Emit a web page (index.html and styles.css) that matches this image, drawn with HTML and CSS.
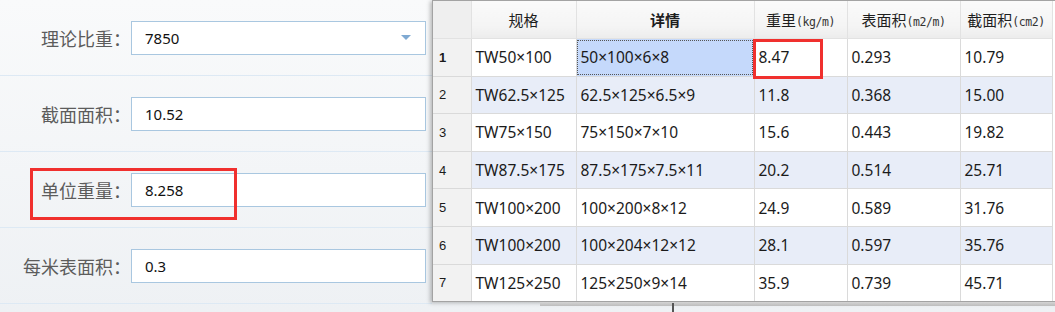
FILE: index.html
```html
<!DOCTYPE html>
<html lang="zh-CN">
<head>
  <meta charset="UTF-8">
  <meta name="viewport" content="width=device-width, initial-scale=1.0">
  <title>型钢参数</title>
  <link rel="stylesheet" href="styles.css">
</head>
<body>
  <div class="panel">
    <div class="form-row">
      <label class="field-label" for="density">理论比重：</label>
      <div class="field combo">
        <input type="text" id="density" value="7850">
        <span class="arrow"></span>
      </div>
    </div>
    <div class="form-row">
      <label class="field-label" for="area">截面面积：</label>
      <div class="field"><input type="text" id="area" value="10.52"></div>
    </div>
    <div class="form-row">
      <label class="field-label" for="weight">单位重量：</label>
      <div class="field"><input type="text" id="weight" value="8.258"></div>
      <span class="mark mark-weight"></span>
    </div>
    <div class="form-row">
      <label class="field-label" for="surface">每米表面积：</label>
      <div class="field"><input type="text" id="surface" value="0.3"></div>
    </div>
  </div>

  <!-- dropdown grid of section sizes, floats over the form -->
  <div class="popup">
    <table class="grid">
      <colgroup>
        <col class="c-num"><col class="c-spec"><col class="c-detail"><col class="c-wt"><col class="c-surf"><col class="c-area">
      </colgroup>
      <thead>
        <tr>
          <th class="corner"></th>
          <th>规格</th>
          <th class="bold">详情</th>
          <th>重里<small>(kg/m)</small></th>
          <th>表面积<small>(m2/m)</small></th>
          <th>截面积<small>(cm2)</small></th>
        </tr>
      </thead>
      <tbody>
        <tr>
          <td class="num bold">1</td><td>TW50×100</td><td class="selected">50×100×6×8</td>
          <td>8.47</td><td>0.293</td><td>10.79</td>
        </tr>
        <tr class="alt">
          <td class="num">2</td><td>TW62.5×125</td><td>62.5×125×6.5×9</td><td>11.8</td><td>0.368</td><td>15.00</td>
        </tr>
        <tr>
          <td class="num">3</td><td>TW75×150</td><td>75×150×7×10</td><td>15.6</td><td>0.443</td><td>19.82</td>
        </tr>
        <tr class="alt">
          <td class="num">4</td><td>TW87.5×175</td><td>87.5×175×7.5×11</td><td>20.2</td><td>0.514</td><td>25.71</td>
        </tr>
        <tr>
          <td class="num">5</td><td>TW100×200</td><td>100×200×8×12</td><td>24.9</td><td>0.589</td><td>31.76</td>
        </tr>
        <tr class="alt">
          <td class="num">6</td><td>TW100×200</td><td>100×204×12×12</td><td>28.1</td><td>0.597</td><td>35.76</td>
        </tr>
        <tr>
          <td class="num">7</td><td>TW125×250</td><td>125×250×9×14</td><td>35.9</td><td>0.739</td><td>45.71</td>
        </tr>
      </tbody>
    </table>
    <span class="mark mark-cell"></span>
  </div>
  <div class="scroll-strip"><span class="tick"></span></div>
</body>
</html>
```

FILE: styles.css
```css
body {
  margin: 0;
  padding: 0;
  width: 1055px;
  height: 312px;
  overflow: hidden;
  position: relative;
  font-family: "Noto Sans", "Noto Sans CJK SC", sans-serif;
  background: linear-gradient(180deg, #f9fafb 0%, #eef1f4 100%);
}

/* left form */
.panel {
  width: 432px;
}

.form-row {
  position: relative;
  display: flex;
  align-items: center;
  height: 75px;
  border-bottom: 1px solid #dde9f4;
}

.field-label {
  width: 131px;
  flex: none;
  text-align: right;
  font-family: "Noto Sans CJK SC", sans-serif;
  font-size: 18px;
  color: #5c5c5c;
  white-space: nowrap;
}

.field {
  position: relative;
  width: 295px;
  height: 34px;
  box-sizing: border-box;
  border: 1px solid #a9c7e0;
  background: #fff;
}

.field input {
  width: 100%;
  height: 100%;
  box-sizing: border-box;
  border: none;
  outline: none;
  padding: 0 0 0 13px;
  background: transparent;
  font-family: "Noto Sans", sans-serif;
  font-size: 15px;
  color: #111;
}

.combo .arrow {
  position: absolute;
  right: 14px;
  top: 13px;
  width: 0;
  height: 0;
  border-left: 5px solid transparent;
  border-right: 5px solid transparent;
  border-top: 5px solid #7fa9d2;
}

.mark {
  position: absolute;
  border: 3px solid #f0302e;
  box-sizing: border-box;
  pointer-events: none;
}

.mark-weight {
  left: 30px;
  top: 16px;
  width: 207px;
  height: 52px;
}

/* dropdown grid */
.popup {
  position: absolute;
  left: 432px;
  top: 0;
  width: 640px;
  height: 302px;
  box-sizing: border-box;
  border: 1px solid #a3a3a3;
  border-right: none;
  background: #fff;
  box-shadow: -2px 1px 4px rgba(0, 0, 0, 0.25);
  overflow: hidden;
}

.grid {
  border-collapse: collapse;
  table-layout: fixed;
  width: 619px;
  font-family: "Noto Sans", "Noto Sans CJK SC", sans-serif;
  font-size: 15.5px;
  color: #1b1b1b;
}

.c-num { width: 38px; }
.c-spec { width: 105px; }
.c-detail { width: 178px; }
.c-wt { width: 93px; }
.c-surf { width: 113px; }
.c-area { width: 92px; }

.grid th {
  height: 37px;
  padding: 0;
  border: 1px solid #e2e2e2;
  border-top: none;
  background: linear-gradient(180deg, #fafafa 0%, #f4f4f4 70%, #ececec 100%);
  font-family: "Noto Sans CJK SC", sans-serif;
  font-size: 15px;
  font-weight: normal;
  color: #1e1e1e;
  text-align: center;
  white-space: nowrap;
}

.grid th small {
  font-family: "DejaVu Sans Mono", monospace;
  font-size: 11.5px;
  color: #333;
  letter-spacing: -0.4px;
}

.grid th.bold {
  font-weight: bold;
}

.grid th.corner {
  background: #efefef;
  border-left: none;
}

.grid td {
  height: 36.6px;
  padding: 0 0 0 4px;
  border: 1px solid #dadada;
  white-space: nowrap;
  overflow: hidden;
}

.grid tr.alt td {
  background: #e8edf8;
}

.grid td.num {
  padding-left: 6px;
  background: #f2f2f2;
  font-family: "Liberation Sans", sans-serif;
  font-size: 13px;
  border-left: none;
}

.grid tr.alt td.num {
  background: #f2f2f2;
}

.grid td.bold {
  font-weight: bold;
}

.grid td.selected {
  background: #c5d9fb;
  outline: 1px dotted #555;
  outline-offset: -2px;
}

.mark-cell {
  left: 320px;
  top: 38px;
  width: 70px;
  height: 40px;
}

.scroll-strip {
  position: absolute;
  left: 540px;
  top: 302px;
  width: 515px;
  height: 4px;
  background: linear-gradient(180deg, #d4d4d4, #bdbdbd);
}

.scroll-strip .tick {
  position: absolute;
  left: 132px;
  top: 1px;
  width: 2px;
  height: 9px;
  background: #555;
}
```
